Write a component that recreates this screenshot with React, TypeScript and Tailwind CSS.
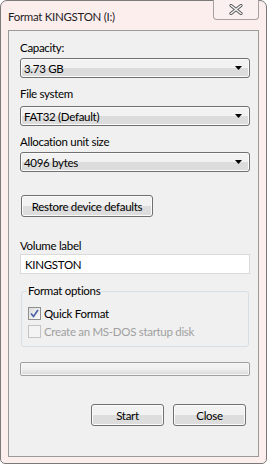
import React from "react"

const font = { fontFamily: 'Lato, "Liberation Sans", sans-serif' }

const txt = "text-[11.5px] tracking-[-0.3px] leading-[15px]"

function Combo({ value }: { value: string }) {
    return (
        <div className="h-[20px] w-[230px] ml-[11px] flex items-center justify-between rounded-[3px] border border-[#707070] bg-gradient-to-b from-[#f2f2f2] from-50% to-[#dcdcdc] to-50% pl-[3px] pr-[7px] shadow-[inset_0_0_0_1px_#fcfcfc]">
            <span className={txt + " text-black whitespace-nowrap"}>{value}</span>
            <svg width="7" height="4" viewBox="0 0 7 4"><path d="M0 0H7L3.5 4Z" fill="#000" /></svg>
        </div>
    )
}

function Button({ label, className }: { label: string, className: string }) {
    return (
        <div className={"h-[22px] flex items-center justify-center whitespace-nowrap rounded-[3px] border border-[#707070] bg-gradient-to-b from-[#f2f2f2] from-50% to-[#dddddd] to-50% shadow-[inset_0_0_0_1px_#fbfbfb] text-black " + txt + " " + className}>
            {label}
        </div>
    )
}

export default function App() {
    return (
        <div style={font} className="w-[267px] h-[464px] bg-[#fdeeee] border border-[#7a7a7a] rounded-t-[7px] rounded-b-[5px] flex flex-col relative">
            <div className="h-[29px] flex items-start">
                <span className={"ml-[7px] mt-[8px] text-[#1e1e1e] " + txt}>Format KINGSTON (I:)</span>
            </div>
            <div className="absolute right-[7px] top-[-1px] w-[46px] h-[20px] border border-[#a7a0a0] border-t-0 rounded-b-[4px] bg-[#fbf0f0] flex items-center justify-center">
                <svg width="14" height="11" viewBox="0 0 14 11">
                    <path d="M2 1.5L12 9.5M12 1.5L2 9.5" stroke="#5a5a5a" strokeWidth="3.2" strokeLinecap="round" />
                    <path d="M2 1.5L12 9.5M12 1.5L2 9.5" stroke="#f4f4f4" strokeWidth="1.4" strokeLinecap="round" />
                </svg>
            </div>
            <div className="mx-[7px] h-[427px] bg-[#f0f0f0] border border-[#9a9a9a] flex flex-col">
                <div className={"mt-[9px] ml-[11px] text-black " + txt}>Capacity:</div>
                <div className="mt-[3px]"><Combo value="3.73 GB" /></div>
                <div className={"mt-[8px] ml-[11px] text-black " + txt}>File system</div>
                <div className="mt-[5px]"><Combo value="FAT32 (Default)" /></div>
                <div className={"mt-[8px] ml-[11px] text-black " + txt}>Allocation unit size</div>
                <div className="mt-[3px]"><Combo value="4096 bytes" /></div>
                <div className="mt-[23px] ml-[12px]"><Button label="Restore device defaults" className="w-[132px]" /></div>
                <div className={"mt-[21px] ml-[11px] text-black " + txt}>Volume label</div>
                <div className={"mt-[1px] ml-[11px] w-[230px] h-[20px] bg-white border border-[#dadada] flex items-center pl-[4px] text-black " + txt}>KINGSTON</div>
                <div className="mt-[17px] ml-[12px] w-[228px] h-[56px] border border-[#d5dfe5] rounded-[3px] relative flex flex-col pl-[6px]">
                    <span className={"absolute left-[5px] top-[-9px] px-[1px] bg-[#f0f0f0] text-black " + txt}>Format options</span>
                    <div className="mt-[14px] flex items-center h-[15px]">
                        <div className="w-[13px] h-[13px] border border-[#8e8f8f] bg-gradient-to-br from-[#dcdcdc] to-[#fbfbfb] flex items-center justify-center">
                            <svg width="9" height="9" viewBox="0 0 9 9"><path d="M1 4.5L3.5 7.5L8 1" stroke="#4a5fa8" strokeWidth="1.6" fill="none" /></svg>
                        </div>
                        <span className={"ml-[3px] text-black " + txt}>Quick Format</span>
                    </div>
                    <div className="mt-[3px] flex items-center h-[15px]">
                        <div className="w-[13px] h-[13px] border border-[#c4c4c4] bg-[#f4f4f4]" />
                        <span className={"ml-[3px] text-[#a0a0a0] whitespace-nowrap " + txt}>Create an MS-DOS startup disk</span>
                    </div>
                </div>
                <div className="mt-[15px] ml-[11px] w-[230px] h-[14px] rounded-[2px] border border-[#a0a0a0] bg-gradient-to-b from-[#f3f3f3] from-40% to-[#d8d8d8] shadow-[inset_0_0_0_1px_#f6f6f6]" />
                <div className="mt-[28px] flex justify-end gap-[9px] pr-[12px]">
                    <Button label="Start" className="w-[73px]" />
                    <Button label="Close" className="w-[73px]" />
                </div>
            </div>
        </div>
    )
}
